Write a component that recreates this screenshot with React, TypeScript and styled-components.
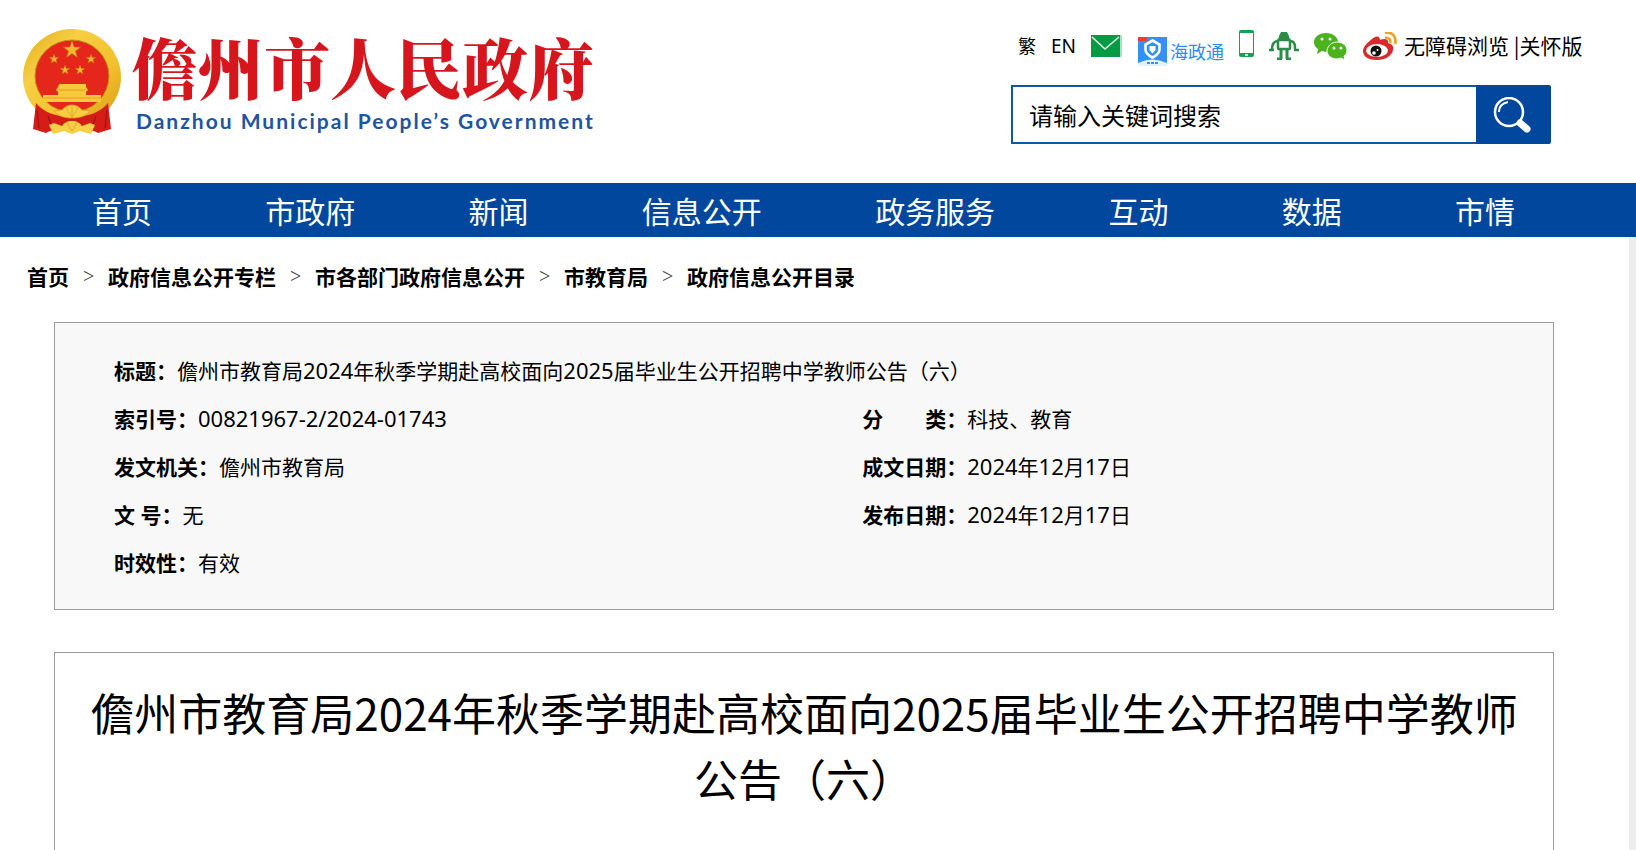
import React from "react";
import styled, { createGlobalStyle } from "styled-components";

const GlobalStyle = createGlobalStyle`
  * { box-sizing: border-box; }
  body { margin: 0; background: #fff; color: #000; font-family: "Noto Sans", "Noto Sans CJK SC", sans-serif; }
  a { color: inherit; text-decoration: none; }
`;

const Header = styled.header`
  display: flex;
  justify-content: space-between;
  height: 183px;
  padding: 0 50px 0 22px;
`;

const Brand = styled.a`
  display: flex;
  align-items: flex-start;
  gap: 10px;
  padding-top: 28px;
`;

const BrandText = styled.span`
  display: flex;
  flex-direction: column;
`;

const BrandName = styled.span`
  color: #d7151c;
  font: 900 66px/76px "Noto Serif CJK SC", "Noto Sans CJK SC", serif;
  white-space: nowrap;
`;

const BrandLatin = styled.span`
  color: #1d55a3;
  font: 700 21px/34px Lato, sans-serif;
  letter-spacing: 2px;
  padding-left: 4px;
  white-space: nowrap;
`;

const Tools = styled.div`
  flex: none;
  width: 575px;
  padding-top: 27px;
`;

const ToolRow = styled.div`
  display: flex;
  align-items: center;
  height: 38px;
  gap: 15px;
  padding-left: 7px;
  white-space: nowrap;
  margin-bottom: 20px;
`;

const ToolLink = styled.a<{ $size?: number }>`
  display: flex;
  align-items: center;
  font-size: ${(p) => p.$size ?? 21}px;
  line-height: 28px;
`;

const AppLink = styled(ToolLink)`
  gap: 3px;
  color: #2b8df7;
  padding: 11px 0 0 1px;
`;

const PhoneLink = styled(ToolLink)`
  padding-bottom: 5px;
`;

const ToolText = styled.div`
  display: flex;
  align-items: center;
  gap: 7px;
  padding-left: 1px;
  font: 21px/36px "Noto Sans CJK SC", sans-serif;
`;

const AccessLinks = styled.span`
  padding-bottom: 2px;
`;

const Search = styled.form`
  display: flex;
  width: 540px;
  height: 59px;
`;

const SearchInput = styled.input`
  flex: 1;
  min-width: 0;
  border: 2px solid #0f57a8;
  border-right: 0;
  padding: 0 16px;
  font: 24px "Noto Sans CJK SC", sans-serif;
  outline: 0;
  &::placeholder { color: #000; opacity: 1; }
`;

const SearchButton = styled.button`
  display: flex;
  align-items: center;
  justify-content: center;
  width: 75px;
  border: 0;
  padding: 0 4px 0 0;
  border-radius: 0 2px 2px 0;
  background: #00479d;
`;

const Nav = styled.nav`
  display: flex;
  align-items: center;
  justify-content: space-between;
  height: 54px;
  padding: 0 121px 0 92px;
  background: #00479d;
  color: #fff;
  font-size: 30px;
  white-space: nowrap;
`;

const Page = styled.main`
  border-right: 7px solid #ededed;
  padding: 24px 75px 0 27px;
`;

const Crumbs = styled.nav`
  display: flex;
  align-items: center;
  gap: 14px;
  height: 30px;
  font-size: 21px;
  font-weight: 700;
  white-space: nowrap;
`;

const CrumbMark = styled.span`
  width: 11px;
  color: #444;
  font: 20px/26px "Liberation Serif", serif;
  text-align: center;
`;

const Meta = styled.dl`
  display: grid;
  grid-template-columns: 52fr 48fr;
  margin: 31px 0 0 27px;
  padding: 24px 0 22px 59px;
  border: 1px solid #9b9b9b;
  background: #f8f8f8;
  font-size: 21px;
  line-height: 48px;
`;

const MetaItem = styled.div<{ $wide?: boolean }>`
  display: flex;
  grid-column: ${(p) => (p.$wide ? "1 / -1" : "auto")};
  white-space: pre;
`;

const MetaLabel = styled.dt`
  font-weight: 700;
`;

const MetaValue = styled.dd`
  margin: 0;
`;

const Num = styled.span`
  font-size: 22px;
  line-height: 24px;
`;

const Article = styled.article`
  min-height: 198px;
  margin: 42px 0 0 27px;
  padding: 26px 30px;
  border: 1px solid #9b9b9b;
  border-bottom: 0;
`;

const Title = styled.h1`
  margin: 0;
  font: 400 44px/66px "Noto Sans CJK SC", sans-serif;
  text-align: center;
`;

const star = (cx: number, cy: number, r: number) =>
  Array.from({ length: 10 }, (_, i) => {
    const a = (Math.PI * i) / 5 - Math.PI / 2;
    const d = i % 2 ? r * 0.4 : r;
    return `${cx + d * Math.cos(a)},${cy + d * Math.sin(a)}`;
  }).join(" ");

const Emblem = () => (
  <svg width="100" height="108" viewBox="0 0 100 108" aria-hidden="true">
    <defs>
      <linearGradient id="gold" x1="0" y1="0" x2="1" y2="1">
        <stop offset="0" stopColor="#e0a91c" />
        <stop offset="0.3" stopColor="#f7cf42" />
        <stop offset="0.65" stopColor="#f2c02c" />
        <stop offset="1" stopColor="#d99a17" />
      </linearGradient>
    </defs>
    <ellipse cx="50" cy="49" rx="49" ry="48" fill="url(#gold)" />
    <ellipse cx="50" cy="48" rx="37" ry="36" fill="#e5261b" stroke="#c98a16" />
    <g fill="#f0b92b" stroke="#c4761a" strokeWidth="0.5">
      <polygon points={star(50, 22, 9)} />
      <polygon points={star(32, 31, 5)} />
      <polygon points={star(69, 31, 5)} />
      <polygon points={star(43, 42, 5)} />
      <polygon points={star(58, 42, 5)} />
    </g>
    <path d="M37 56h27v3l2 3-2 2v3h15v7H21v-7h15v-3l-2-2 2-3z" fill="#f8c93a" />
    <path d="M36 62h28M21 70h58" stroke="#dd9420" strokeWidth="0.8" />
    <path d="M14 75c5 6 12 10 20 12l16 3 16-3c8-2 15-6 20-12l3 26-13 4-4-2H28l-4 2-13-4z" fill="#d51c17" />
    <path d="M40 82c2-3 6-5 10-5s8 2 10 5c3 0 5 1 8 1-4 5-10 7-18 7s-14-2-18-7c3 0 5-1 8-1z" fill="#f8ce40" stroke="#dfa023" strokeWidth="0.8" />
    <path d="M50 93c5 0 8 2 10 5l8-3 5 2-4 9-11-3-8 3-8-3-11 3-4-9 5-2 8 3c2-3 5-5 10-5z" fill="#f8cf45" />
    <path d="M43 79l7 10 7-10M50 78v12M45 95l5 8 5-8" stroke="#dfa023" strokeWidth="0.8" fill="none" />
    <path d="M15 82l2 18M85 82l-2 18M26 88l3 8M74 88l-3 8" stroke="#a01212" strokeWidth="1.2" />
  </svg>
);

const MailIcon = () => (
  <svg width="31" height="22" viewBox="0 0 31 22" aria-hidden="true">
    <rect width="31" height="22" fill="#079a45" />
    <path d="M1 2l13 12L28 2M30 0v22" fill="none" stroke="#d9f2e3" strokeWidth="1.6" />
  </svg>
);

const AppIcon = () => (
  <svg width="29" height="29" viewBox="0 0 29 29" aria-hidden="true">
    <rect width="29" height="26" fill="#3390f7" />
    <rect width="9" height="4" fill="#ed3b35" />
    <path d="M14.500 3.500l7 4v5c0 4-3 6-7 8-4-2-7-4-7-8v-5z" fill="none" stroke="#fff" strokeWidth="2.600" />
    <path d="M11.500 9h6v4l-3 3.500-3-3.500z" fill="#fff" />
    <path d="M0 26q14-7 29 0v3H0z" fill="#e5f2ff" />
    <path d="M9 26h12" stroke="#3390f7" strokeWidth="2" strokeDasharray="3 1" />
  </svg>
);

const PhoneIcon = () => (
  <svg width="15" height="27" viewBox="0 0 15 27" aria-hidden="true">
    <rect width="15" height="27" rx="2" fill="#17a052" />
    <rect x="1" y="3" width="13" height="20" fill="#fff" />
    <path d="M6 25h3" stroke="#fff" strokeWidth="1.500" />
  </svg>
);

const RobotIcon = () => (
  <svg width="30" height="28" viewBox="0 0 30 28" fill="none" stroke="#2b8c47" aria-hidden="true">
    <path d="M8 8c1-1 2-2 2-4l2-4h6l2 4c0 2 1 3 2 4z" fill="#2b8c47" stroke="none" />
    <rect x="9" y="8" width="12" height="9" rx="1" strokeWidth="2.500" />
    <path d="M8 9c-4 1-5 4-5 8M22 9c4 1 4 4 4 8M0 18h5M25 18h5" strokeWidth="2.500" />
    <path d="M12 17v10M18 17v10M8 27h5M17 27h5" strokeWidth="3" />
  </svg>
);

const WechatIcon = () => (
  <svg width="33" height="27" viewBox="0 0 33 27" aria-hidden="true">
    <path d="M12 0c7 0 12 4 12 9s-5 10-12 10l-4-1-5 3 1-5c-3-2-4-4-4-7 0-5 5-9 12-9z" fill="#4bb31c" />
    <path d="M23 9c6 0 10 4 10 8 0 3-1 5-3 6l1 4-4-2-4 1c-6 0-10-4-10-8s4-9 10-9z" fill="#4bb31c" stroke="#fff" />
    <g fill="#fff"><circle cx="8" cy="6" r="1.500" /><circle cx="16" cy="6" r="1.500" /><circle cx="20" cy="15" r="1.500" /><circle cx="27" cy="15" r="1.500" /></g>
  </svg>
);

const WeiboIcon = () => (
  <svg width="34" height="28" viewBox="0 0 34 28" aria-hidden="true">
    <path d="M9 7c3-3 8-4 8 1 4-2 9-1 8 3 4 1 6 3 5 7-1 6-8 10-16 10S0 25 0 19C0 15 4 11 9 7z" fill="#d82a2c" />
    <ellipse cx="14" cy="18.500" rx="11" ry="6.500" fill="#fff" />
    <circle cx="13" cy="19" r="5.500" fill="#111" />
    <circle cx="11" cy="21" r="1.800" fill="#fff" />
    <circle cx="14.500" cy="18" r="1" fill="#fff" />
    <path d="M22 1c7-2 12 4 10 11M22 6c4-1 6 2 5 5" fill="none" stroke="#efa02f" strokeWidth="2.800" />
  </svg>
);

const SearchIcon = () => (
  <svg width="38" height="36" viewBox="0 0 38 36" fill="none" stroke="#fff" aria-hidden="true">
    <circle cx="16" cy="15" r="14" strokeWidth="2.500" />
    <path d="M6 15c0-6 4-9 9-10" strokeWidth="2" />
    <path d="M27 26l7 6" strokeWidth="7" strokeLinecap="round" />
  </svg>
);

const navItems = ["首页", "市政府", "新闻", "信息公开", "政务服务", "互动", "数据", "市情"];
const crumbs = ["首页", "政府信息公开专栏", "市各部门政府信息公开", "市教育局", "政府信息公开目录"];
const meta = [
  { label: "标题：", value: "儋州市教育局2024年秋季学期赴高校面向2025届毕业生公开招聘中学教师公告（六）", wide: true },
  { label: "索引号：", value: "00821967-2/2024-01743" },
  { label: "分　　类：", value: "科技、教育" },
  { label: "发文机关：", value: "儋州市教育局" },
  { label: "成文日期：", value: "2024年12月17日" },
  { label: "文 号：", value: "无" },
  { label: "发布日期：", value: "2024年12月17日" },
  { label: "时效性：", value: "有效", wide: true },
];

const withNumbers = (text: string) =>
  text.split(/([\d/-]+)/).map((part, i) => (i % 2 ? <Num key={i}>{part}</Num> : part));

export default function App() {
  return (
    <>
      <GlobalStyle />
      <Header>
        <Brand href="#">
          <Emblem />
          <BrandText>
            <BrandName>儋州市人民政府</BrandName>
            <BrandLatin>Danzhou Municipal People’s Government</BrandLatin>
          </BrandText>
        </Brand>
        <Tools>
          <ToolRow>
            <ToolLink href="#" $size={18}>繁</ToolLink>
            <ToolLink href="#" $size={19}>EN</ToolLink>
            <ToolLink href="#" aria-label="邮箱"><MailIcon /></ToolLink>
            <AppLink href="#" $size={18}><AppIcon />海政通</AppLink>
            <PhoneLink href="#" aria-label="手机版"><PhoneIcon /></PhoneLink>
            <ToolLink href="#" aria-label="智能问答"><RobotIcon /></ToolLink>
            <ToolLink href="#" aria-label="微信"><WechatIcon /></ToolLink>
            <ToolText>
              <ToolLink href="#" aria-label="微博"><WeiboIcon /></ToolLink>
              <AccessLinks><a href="#">无障碍浏览</a> |<a href="#">关怀版</a></AccessLinks>
            </ToolText>
          </ToolRow>
          <Search role="search">
            <SearchInput type="text" aria-label="搜索" placeholder="请输入关键词搜索" />
            <SearchButton type="button" aria-label="搜索"><SearchIcon /></SearchButton>
          </Search>
        </Tools>
      </Header>
      <Nav>
        {navItems.map((item) => <a key={item} href="#">{item}</a>)}
      </Nav>
      <Page>
        <Crumbs>
          {crumbs.map((c, i) => (
            <React.Fragment key={c}>
              {i > 0 && <CrumbMark>&gt;</CrumbMark>}
              <a href="#">{c}</a>
            </React.Fragment>
          ))}
        </Crumbs>
        <Meta>
          {meta.map((m) => (
            <MetaItem key={m.label} $wide={m.wide}>
              <MetaLabel>{m.label}</MetaLabel>
              <MetaValue>{withNumbers(m.value)}</MetaValue>
            </MetaItem>
          ))}
        </Meta>
        <Article>
          <Title>儋州市教育局2024年秋季学期赴高校面向2025届毕业生公开招聘中学教师公告（六）</Title>
        </Article>
      </Page>
    </>
  );
}
